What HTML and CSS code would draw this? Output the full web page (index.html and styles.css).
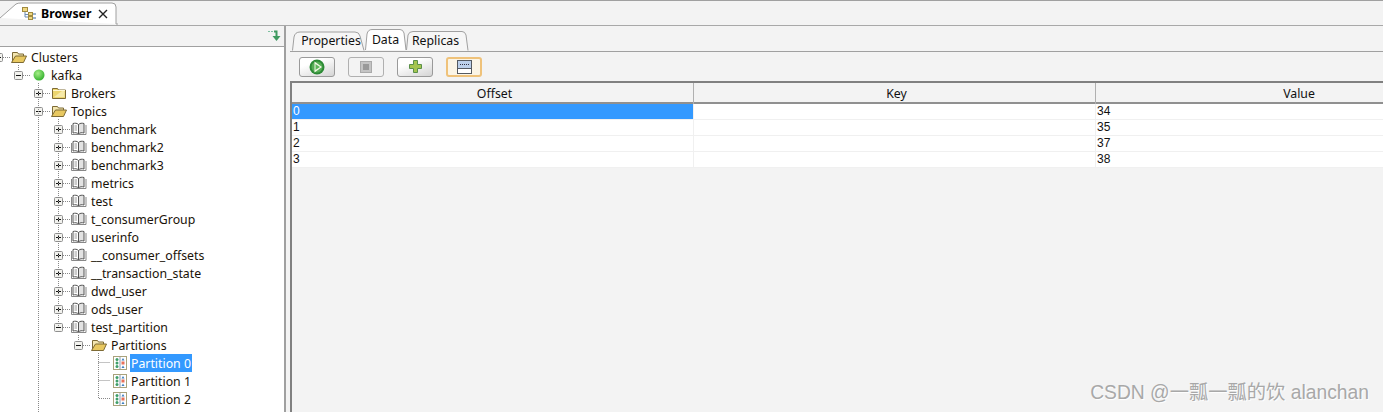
FILE: index.html
```html
<!DOCTYPE html>
<html lang="en">
<head>
<meta charset="utf-8">
<title>Browser</title>
<link rel="stylesheet" href="styles.css">
</head>
<body>
<svg class="defs" width="0" height="0" aria-hidden="true">
  <symbol id="folder-open" viewBox="0 0 16 14">
    <path d="M1.500 12.500V2.500h5l1 1.500h5v2" fill="#f3e6b0" stroke="#7d6a35"/>
    <path d="M.5 12.500l4-6.500h11l-3 6.500z" fill="#e8c860" stroke="#7d6a35"/>
  </symbol>
  <symbol id="folder-closed" viewBox="0 0 16 14">
    <path d="M1.500 12.500V2.500h5l1 1.500h7v8.500z" fill="#ecd56e" stroke="#7d6a35"/>
    <path d="M3 11l8-6h2.500v6z" fill="#f6e9a8"/>
    <path d="M2 4.500h12" stroke="#fff6cf"/>
  </symbol>
  <symbol id="book" viewBox="0 0 16 14">
    <path d="M7.500 2.500C6 1 4 1 2 1.500V11c2-.5 4-.5 5.500 1z" fill="#fff" stroke="#555"/>
    <path d="M7.500 2.500C9 1 11 1 13 1.500V11c-2-.5-4-.5-5.500 1z" fill="#e2e2e2" stroke="#555"/>
    <path d="M.5 3v9.500h14.500V3" fill="none" stroke="#888"/>
    <path d="M3.500 4h2.500M3.500 6h2.500M3.500 8h2.500" stroke="#999"/>
  </symbol>
  <symbol id="grid" viewBox="0 0 14 14">
    <rect x=".5" y=".5" width="13" height="13" fill="#fff" stroke="#a9a27c"/>
    <path d="M7 1v12" stroke="#8a9ab0"/>
    <circle cx="4" cy="3.500" r="1.500" fill="#3f9f6a"/>
    <circle cx="4" cy="7" r="1.500" fill="#3f9f6a"/>
    <circle cx="4" cy="10.500" r="1.500" fill="#3f9f6a"/>
    <path d="M10 2l1.500 2.500h-3z" fill="#3d7fc0"/>
    <rect x="8.500" y="5.500" width="3" height="3" fill="#e8705a"/>
    <path d="M10 9.500l1.500 2.500h-3z" fill="#3d7fc0"/>
  </symbol>
  <symbol id="plus-box" viewBox="0 0 9 9">
    <rect x=".5" y=".5" width="8" height="8" rx="1" fill="#f2f2ee" stroke="#8f8f8f"/>
    <path d="M2 4.500h5M4.500 2v5" stroke="#111"/>
  </symbol>
  <symbol id="minus-box" viewBox="0 0 9 9">
    <rect x=".5" y=".5" width="8" height="8" rx="1" fill="#f2f2ee" stroke="#8f8f8f"/>
    <path d="M2 4.500h5" stroke="#111"/>
  </symbol>
</svg>

<header class="editor-tabs">
  <div class="editor-tab">
    <svg class="editor-tab-shape" width="118" height="25" viewBox="0 0 118 25"><path d="M0 18L16 4Q18 3 21 3H112Q116 3 116 7V24H118" fill="#fff" stroke="#a0a0a0"/></svg>
    <svg class="tab-icon" width="15" height="13" viewBox="0 0 15 13">
      <rect x=".5" y=".5" width="5" height="4" fill="#f0d880" stroke="#a08a40"/>
      <path d="M3 5v5h3M3 7.500h3" fill="none" stroke="#6a8ab0"/>
      <rect x="6.500" y="5.500" width="4" height="3" fill="#f0d880" stroke="#a08a40"/>
      <rect x="6.500" y="9.500" width="4" height="3" fill="#f0d880" stroke="#a08a40"/>
      <path d="M11 7h3M11 11h3" stroke="#3a6aa0"/>
    </svg>
    <span class="tab-title">Browser</span>
    <svg class="tab-close" width="10" height="10" viewBox="0 0 10 10"><path d="M1 1l8 8M9 1l-8 8" stroke="#222" stroke-width="1.400"/></svg>
  </div>
</header>

<main class="panes">
  <section class="left">
    <div class="left-head">
      <svg width="13" height="12" viewBox="0 0 13 12"><path d="M0 1h2v1H0zM3 1h2v1H3z" fill="#7fc0a0"/><path d="M6 1.500h2.500V6" fill="none" stroke="#3f9a60" stroke-width="2"/><path d="M4.500 6h8L8.500 11z" fill="#3f9a60"/></svg>
    </div>
    <div class="tree">
      <svg class="guides" width="285" height="365" viewBox="0 0 285 365">
        <path d="M18.500 18v5M38.500 36v329M58.500 72v207M78.500 288v5M98.500 306v45.500h12M98.500 315.500h12M98.500 333.500h12"/>
      </svg>
      <div class="row d0"><svg class="exp"><use href="#minus-box"/></svg><i class="dash"></i><svg class="ico"><use href="#folder-open"/></svg><span class="label">Clusters</span></div>
      <div class="row d1"><svg class="exp"><use href="#minus-box"/></svg><i class="dash"></i><svg class="ico" viewBox="0 0 16 14"><defs><radialGradient id="g" cx=".4" cy=".35" r=".7"><stop offset="0" stop-color="#a6ee88"/><stop offset="1" stop-color="#2fae2a"/></radialGradient></defs><circle cx="8" cy="7" r="5.500" fill="url(#g)"/></svg><span class="label">kafka</span></div>
      <div class="row d2"><svg class="exp"><use href="#plus-box"/></svg><i class="dash"></i><svg class="ico"><use href="#folder-closed"/></svg><span class="label">Brokers</span></div>
      <div class="row d2"><svg class="exp"><use href="#minus-box"/></svg><i class="dash"></i><svg class="ico"><use href="#folder-open"/></svg><span class="label">Topics</span></div>
      <div class="row d3"><svg class="exp"><use href="#plus-box"/></svg><i class="dash"></i><svg class="ico"><use href="#book"/></svg><span class="label">benchmark</span></div>
      <div class="row d3"><svg class="exp"><use href="#plus-box"/></svg><i class="dash"></i><svg class="ico"><use href="#book"/></svg><span class="label">benchmark2</span></div>
      <div class="row d3"><svg class="exp"><use href="#plus-box"/></svg><i class="dash"></i><svg class="ico"><use href="#book"/></svg><span class="label">benchmark3</span></div>
      <div class="row d3"><svg class="exp"><use href="#plus-box"/></svg><i class="dash"></i><svg class="ico"><use href="#book"/></svg><span class="label">metrics</span></div>
      <div class="row d3"><svg class="exp"><use href="#plus-box"/></svg><i class="dash"></i><svg class="ico"><use href="#book"/></svg><span class="label">test</span></div>
      <div class="row d3"><svg class="exp"><use href="#plus-box"/></svg><i class="dash"></i><svg class="ico"><use href="#book"/></svg><span class="label">t_consumerGroup</span></div>
      <div class="row d3"><svg class="exp"><use href="#plus-box"/></svg><i class="dash"></i><svg class="ico"><use href="#book"/></svg><span class="label">userinfo</span></div>
      <div class="row d3"><svg class="exp"><use href="#plus-box"/></svg><i class="dash"></i><svg class="ico"><use href="#book"/></svg><span class="label">__consumer_offsets</span></div>
      <div class="row d3"><svg class="exp"><use href="#plus-box"/></svg><i class="dash"></i><svg class="ico"><use href="#book"/></svg><span class="label">__transaction_state</span></div>
      <div class="row d3"><svg class="exp"><use href="#plus-box"/></svg><i class="dash"></i><svg class="ico"><use href="#book"/></svg><span class="label">dwd_user</span></div>
      <div class="row d3"><svg class="exp"><use href="#plus-box"/></svg><i class="dash"></i><svg class="ico"><use href="#book"/></svg><span class="label">ods_user</span></div>
      <div class="row d3"><svg class="exp"><use href="#minus-box"/></svg><i class="dash"></i><svg class="ico"><use href="#book"/></svg><span class="label">test_partition</span></div>
      <div class="row d4"><svg class="exp"><use href="#minus-box"/></svg><i class="dash"></i><svg class="ico"><use href="#folder-open"/></svg><span class="label">Partitions</span></div>
      <div class="row leaf"><svg class="ico-grid"><use href="#grid"/></svg><span class="label selected">Partition 0</span></div>
      <div class="row leaf"><svg class="ico-grid"><use href="#grid"/></svg><span class="label">Partition 1</span></div>
      <div class="row leaf"><svg class="ico-grid"><use href="#grid"/></svg><span class="label">Partition 2</span></div>
      <div class="row d2 last"><svg class="exp"><use href="#plus-box"/></svg><i class="dash"></i><svg class="ico"><use href="#folder-closed"/></svg></div>
    </div>
  </section>

  <section class="right">
    <nav class="sub-tabs">
      <div class="sub-tab tab-properties">
        <svg width="74" height="22" viewBox="0 0 74 22"><path d="M0.500 21.500L2 8Q3 3 8 3H63Q67 3 68 7L72 21.500" fill="#f6f6f6" stroke="#a0a0a0"/></svg>
        <span>Properties</span>
      </div>
      <div class="sub-tab tab-data">
        <svg width="42" height="22" viewBox="0 0 42 22"><path d="M0.500 21L2 5Q3 .5 7 .5H35Q38 .5 39 4L41 21" fill="#fff" stroke="#a0a0a0"/></svg>
        <span>Data</span>
      </div>
      <div class="sub-tab tab-replicas">
        <svg width="63" height="22" viewBox="0 0 63 22"><path d="M0.500 21L2 6Q3 2.500 7 2.500H56Q59 2.500 60 6L62 21.500" fill="#f6f6f6" stroke="#a0a0a0"/></svg>
        <span>Replicas</span>
      </div>
    </nav>
    <div class="toolbar">
      <button class="tool" type="button">
        <svg width="16" height="16" viewBox="0 0 16 16"><circle cx="8" cy="8" r="7.500" fill="#2c8a35"/><circle cx="8" cy="8" r="5.500" fill="#56ad55"/><path d="M5.500 2.500L13 8l-7.500 5.500z" fill="#f4f8e8"/><path d="M6.500 5v6L11 8z" fill="#5db55a"/></svg>
      </button>
      <button class="tool disabled" type="button">
        <svg width="12" height="12" viewBox="0 0 12 12"><rect x=".5" y=".5" width="11" height="11" fill="#c4c4c4" stroke="#aaa"/><rect x="3" y="3" width="6" height="6" fill="#999"/></svg>
      </button>
      <button class="tool" type="button">
        <svg width="13" height="13" viewBox="0 0 13 13"><path d="M4.500.5h4v4h4v4h-4v4h-4v-4h-4v-4h4z" fill="#a5c54f" stroke="#5a9048"/></svg>
      </button>
      <button class="tool active" type="button">
        <svg width="15" height="14" viewBox="0 0 15 14"><rect x=".5" y=".5" width="14" height="13" fill="#fff" stroke="#555a60"/><rect x="1" y="1" width="13" height="7" fill="#bcd0ea"/><path d="M3 4.500h9" stroke="#334" stroke-dasharray="1 1"/><path d="M1 8.500h13" stroke="#555a60"/></svg>
      </button>
    </div>
    <div class="table-wrap">
      <div class="t-row t-head"><div class="cell">Offset</div><div class="cell">Key</div><div class="cell">Value</div></div>
      <div class="t-row selected-row"><div class="cell">0</div><div class="cell"></div><div class="cell">34</div></div>
      <div class="t-row"><div class="cell">1</div><div class="cell"></div><div class="cell">35</div></div>
      <div class="t-row"><div class="cell">2</div><div class="cell"></div><div class="cell">37</div></div>
      <div class="t-row"><div class="cell">3</div><div class="cell"></div><div class="cell">38</div></div>
    </div>
  </section>
</main>
<div class="watermark">CSDN @一瓢一瓢的饮 alanchan</div>
</body>
</html>
```

FILE: styles.css
```css
* { box-sizing: border-box; }
html, body { margin: 0; height: 100%; }
body {
  width: 1383px;
  height: 412px;
  overflow: hidden;
  display: flex;
  flex-direction: column;
  background: #f3f3f3;
  font: 12.300px/18px "Noto Sans", "Liberation Sans", sans-serif;
  color: #111;
  position: relative;
}
.defs { position: absolute; }

.editor-tabs {
  height: 25px;
  flex: none;
  border-top: 1px solid #a0a0a0;
  display: flex;
}
.editor-tab {
  position: relative;
  width: 118px;
  height: 24px;
  display: flex;
  align-items: center;
  padding: 1px 0 0 22px;
}
.editor-tab-shape { position: absolute; left: 0; top: -1px; }
.tab-icon { position: relative; }
.tab-title { position: relative; font-weight: 700; margin-left: 4px; color: #000; }
.tab-close { position: relative; margin-left: 7px; }
.editor-tabs::after {
  content: "";
  flex: 1;
  height: 24px;
  border-bottom: 1px solid #a0a0a0;
}

.panes { flex: 1; display: flex; min-height: 0; border-top: 1px solid #a8a8a8; }
.left {
  width: 286px;
  flex: none;
  display: flex;
  flex-direction: column;
  border-right: 2px solid #a0a0a0;
}
.left-head {
  height: 21px;
  flex: none;
  display: flex;
  justify-content: flex-end;
  align-items: center;
  padding: 0 3px 0 0;
  border-bottom: 1px solid #a0a0a0;
}
.tree {
  flex: 1;
  min-height: 0;
  position: relative;
  background: #fff;
  overflow: hidden;
  padding-top: 1px;
  margin-left: -6px;
}
.guides { position: absolute; left: 6px; top: 0; pointer-events: none; }
.guides path { fill: none; stroke: #888; stroke-dasharray: 1 1; }

.row { height: 18px; display: flex; align-items: center; white-space: nowrap; }
.d1 { padding-left: 20px; }
.d2 { padding-left: 40px; }
.d3 { padding-left: 60px; }
.d4 { padding-left: 80px; }
.leaf { padding-left: 119px; }
.exp { width: 9px; height: 9px; flex: none; }
.dash {
  width: 8px;
  height: 1px;
  flex: none;
  background: repeating-linear-gradient(90deg, #888 0 1px, transparent 1px 2px);
}
.ico { width: 16px; height: 14px; flex: none; }
.ico-grid { width: 14px; height: 14px; flex: none; }
.label { margin-left: 3px; padding: 1px 1px 0; height: 18px; color: #1a1208; }
.selected { background: #3399ff; color: #fff; }

.right { flex: 1; min-width: 0; display: flex; flex-direction: column; padding-left: 4px; overflow: hidden; }
.sub-tabs {
  height: 26px;
  flex: none;
  display: flex;
  align-items: flex-end;
  border-bottom: 1px solid #a0a0a0;
  padding-left: 2px;
}
.sub-tab { position: relative; height: 22px; display: flex; align-items: center; justify-content: center; }
.sub-tab svg { position: absolute; left: 0; top: 0; }
.sub-tab span { position: relative; padding-top: 2px; color: #111; }
.tab-properties { width: 73px; padding-left: 5px; }
.tab-data { width: 41px; }
.tab-data span { padding-top: 0; }
.tab-replicas { width: 63px; padding-right: 4px; }

.toolbar { height: 29px; flex: none; display: flex; gap: 13px; align-items: center; padding: 0 0 0 9px; }
.tool {
  width: 36px;
  height: 20px;
  padding: 0;
  display: flex;
  align-items: center;
  justify-content: center;
  border: 1px solid #9a9a9a;
  border-radius: 3px;
  background: linear-gradient(160deg, #fff 30%, #d4d4d4);
}
.tool.disabled { background: #f3f3f3; border-color: #b0b0b0; }
.tool.active { background: #fbf5e6; border: 2px solid #efc27a; }

.table-wrap {
  flex: 1;
  min-height: 0;
  border-top: 2px solid #808080;
  border-left: 2px solid #808080;
  font: 12px/15px "Liberation Sans", Arial, sans-serif;
}
.t-row {
  display: grid;
  grid-template-columns: 402px 402px 402px;
  height: 16px;
  background: #fff;
  border-bottom: 1px solid #f0f0f0;
  color: #111;
}
.t-head {
  height: 21px;
  background: #f3f3f3;
  border-bottom: 2px solid #909090;
  font: 12.300px/21px "Noto Sans", "Liberation Sans", sans-serif;
  text-align: center;
}
.t-row .cell { padding-left: 1px; border-right: 1px solid #f0f0f0; }
.t-head .cell { padding-left: 4px; border-right: 1px solid #b0b0b0; }
.t-row .cell:last-child { border-right: 0; }
.selected-row .cell:first-child { background: #3399ff; color: #fff; }

.watermark {
  position: absolute;
  right: 14px;
  bottom: 7px;
  font: 19.300px/24px "Liberation Sans", "Noto Sans CJK SC", sans-serif;
  color: #a8a8a8;
  text-shadow: 1px 1px 1px #fff;
  white-space: nowrap;
}
```
